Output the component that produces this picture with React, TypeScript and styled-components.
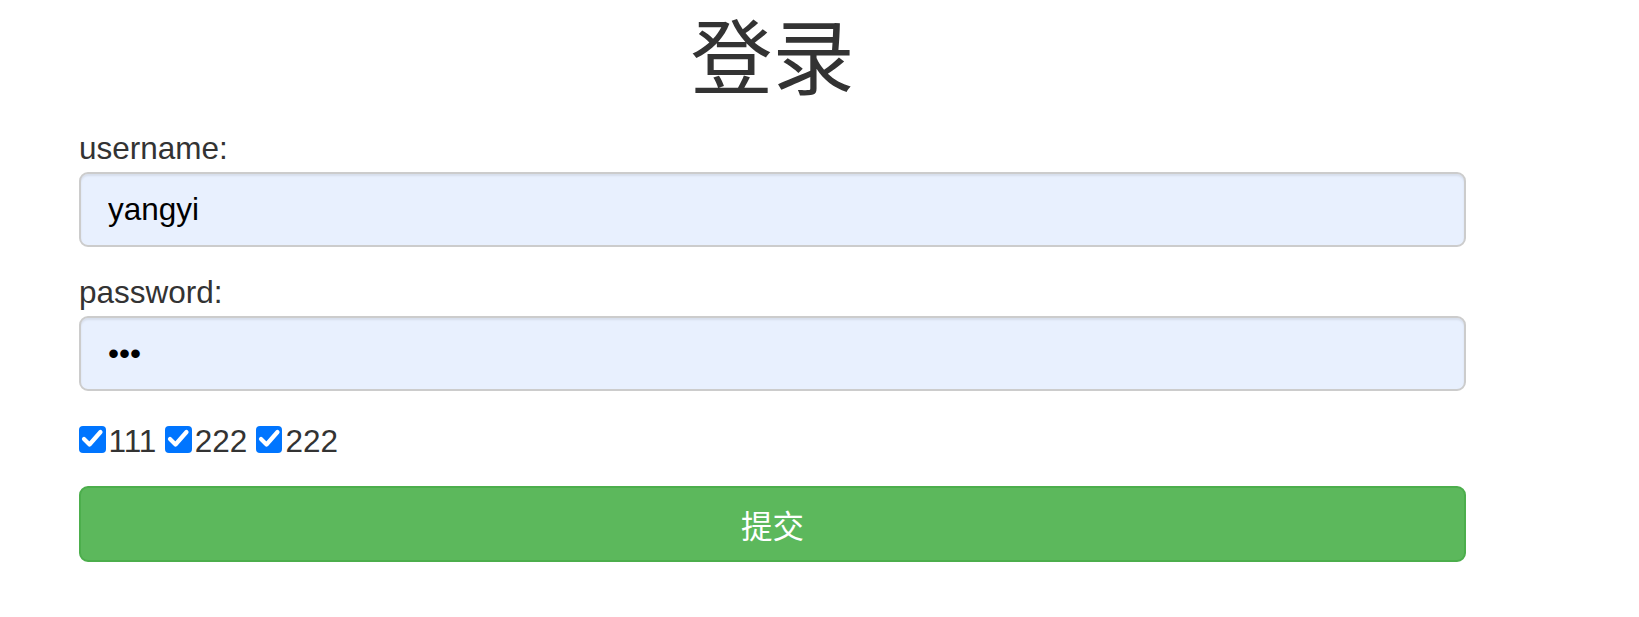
import React from "react";
import styled, { createGlobalStyle } from "styled-components";

const GlobalStyle = createGlobalStyle`
  html, body {
    margin: 0;
    padding: 0;
    background: #ffffff;
  }
  body {
    font-family: "Liberation Sans", Arial, "Noto Sans CJK SC", sans-serif;
    color: #333333;
  }
  * { box-sizing: border-box; }
`;

const Page = styled.div`
  padding: 14px 0 0 79px;
`;

const Form = styled.form`
  width: 1387px;
  display: flex;
  flex-direction: column;
`;

const Title = styled.h1`
  margin: 0 0 20px;
  font-family: "Liberation Sans", Arial, "Noto Sans CJK SC", sans-serif;
  font-size: 82px;
  line-height: 92px;
  font-weight: 400;
  color: #333333;
  text-align: center;
`;

const Field = styled.div<{ $gap: number }>`
  display: flex;
  flex-direction: column;
  margin-bottom: ${(p) => p.$gap}px;
`;

const Label = styled.label`
  display: block;
  font-size: 31.5px;
  line-height: 44px;
  margin-bottom: 2px;
  color: #333333;
`;

const Input = styled.input`
  display: block;
  width: 100%;
  height: 75px;
  padding: 0 27px;
  border: 2px solid #cccccc;
  border-radius: 9px;
  background: #e8f0fe;
  color: #000000;
  font-family: "Liberation Sans", Arial, sans-serif;
  font-size: 31.5px;
  box-shadow: inset 0 2px 2px rgba(0, 0, 0, 0.075);
  outline: none;
`;

const Checks = styled.div`
  font-size: 31.5px;
  line-height: 44px;
  margin-bottom: 23px;
  color: #333333;
`;

const Option = styled.label`
  display: inline;
  cursor: pointer;
`;

const HiddenInput = styled.input`
  position: absolute;
  opacity: 0;
  width: 0;
  height: 0;
  margin: 0;
`;

const Box = styled.span`
  display: inline-block;
  width: 26.5px;
  height: 27px;
  border-radius: 4px;
  background: #0075ff;
  vertical-align: -1px;
  margin-right: 3px;
  svg {
    display: block;
  }
`;

const SubmitButton = styled.button`
  display: block;
  width: 100%;
  height: 76px;
  background: #5cb85c;
  border: 2px solid #4cae4c;
  border-radius: 9px;
  color: #ffffff;
  font-family: "Liberation Sans", Arial, "Noto Sans CJK SC", sans-serif;
  font-size: 31.5px;
  cursor: pointer;
`;

const CheckItem = ({ label }: { label: string }) => (
  <Option>
    <HiddenInput type="checkbox" defaultChecked />
    <Box>
      <svg width="26.5" height="27" viewBox="0 0 26.5 27">
        <polyline
          points="5,13 10.5,18.5 21.5,6"
          fill="none"
          stroke="#ffffff"
          strokeWidth="4.2"
          strokeLinecap="round"
          strokeLinejoin="round"
        />
      </svg>
    </Box>
    {label}
  </Option>
);

export default function App() {
  return (
    <>
      <GlobalStyle />
      <Page>
        <Form onSubmit={(e) => e.preventDefault()}>
          <Title>登录</Title>
          <Field $gap={23}>
            <Label htmlFor="username">username:</Label>
            <Input id="username" type="text" defaultValue="yangyi" />
          </Field>
          <Field $gap={28}>
            <Label htmlFor="password">password:</Label>
            <Input id="password" type="password" defaultValue="123" />
          </Field>
          <Checks>
            <CheckItem label="111" /> <CheckItem label="222" />{" "}
            <CheckItem label="222" />
          </Checks>
          <SubmitButton type="submit">提交</SubmitButton>
        </Form>
      </Page>
    </>
  );
}
